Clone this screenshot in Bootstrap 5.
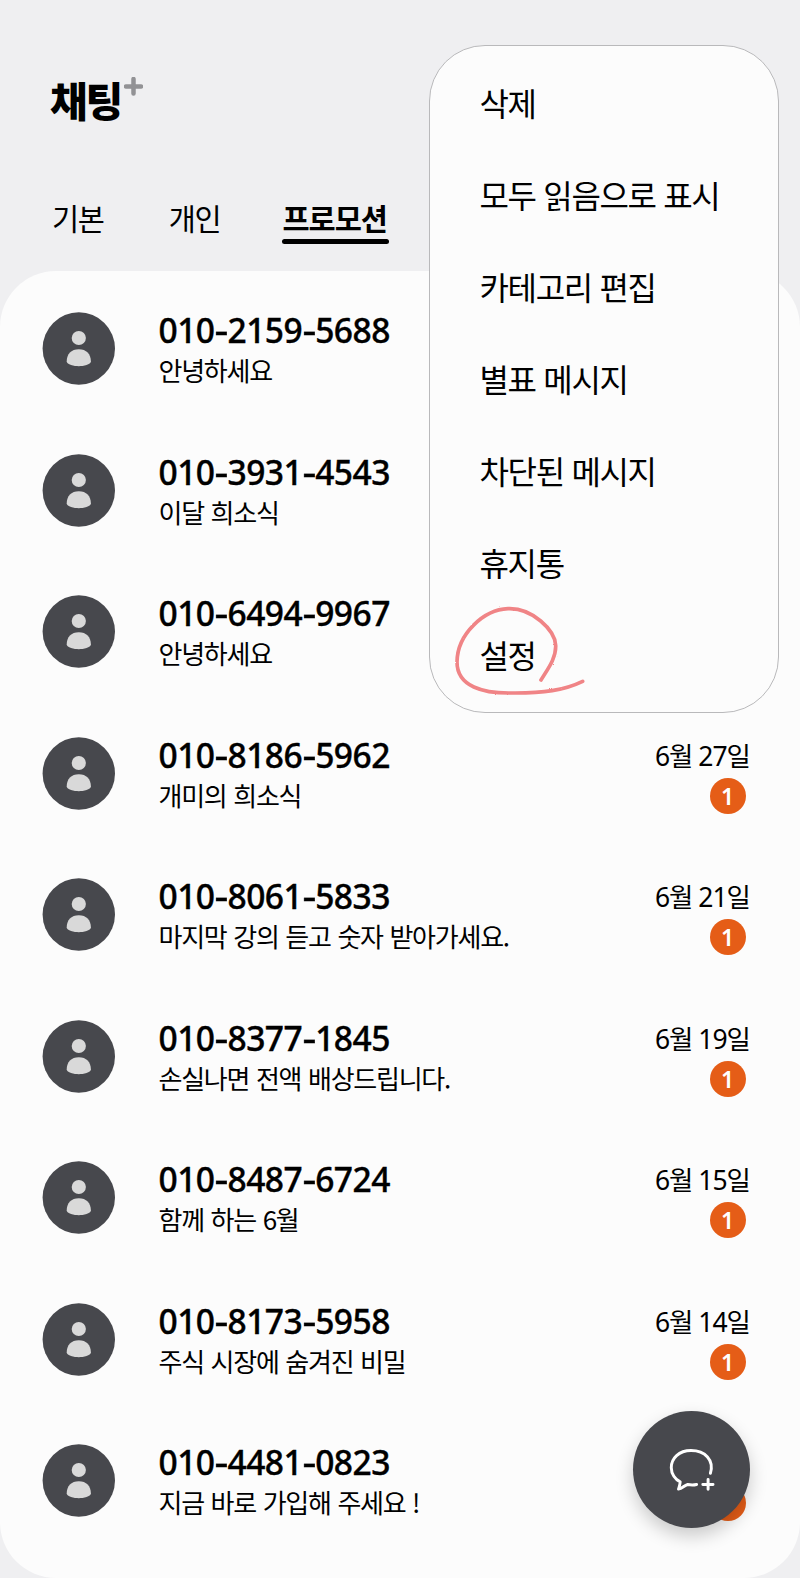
<!DOCTYPE html>
<html lang="ko">
<head>
<meta charset="utf-8">
<meta name="viewport" content="width=device-width, initial-scale=1">
<title>채팅+</title>
<link href="https://cdn.jsdelivr.net/npm/bootstrap@5.3.0/dist/css/bootstrap.min.css" rel="stylesheet">
<style>
  body { background: #efeff1; color: #000; font-family: "Noto Sans CJK KR", sans-serif; }
  .screen { width: 800px; height: 1578px; }
  .app-head { height: 271px; padding: 67px 0 0 50px; }
  .brand { height: 70px; font-size: 41px; font-weight: 900; letter-spacing: -2.1px; line-height: 64px; }
  .brand svg { margin: 10px 0 0 3px; }
  .tabs { margin-top: 55px; padding-left: 2px; gap: 65px; font-size: 29.5px; letter-spacing: -1.3px; line-height: 50px; }
  .tabs a { color: #000; text-decoration: none; height: 52px; }
  .tabs .current { font-weight: 700; letter-spacing: -1px; margin-left: -3px; }
  .tabs .current::after { content: ""; display: block; height: 5px; margin: -3px 0 0; width: 107px; border-radius: 3px; background: #000; }
  .sheet { height: 1306.5px; background: #fcfcfc; border-radius: 56px; padding: 41px 50px 0 42px; }
  .chat { height: 141.5px; }
  .avatar { width: 73px; height: 73px; flex: none; }
  .chat-text { margin-left: 43.5px; white-space: nowrap; }
  .phone { font-family: "Noto Sans", sans-serif; font-weight: 500; font-size: 33.6px; line-height: 36px; letter-spacing: -.55px; margin-bottom: 2px; -webkit-text-stroke: .35px #000; }
  .phone i { display: inline-block; font-style: normal; transform: scaleX(1.28); margin: 0 1.3px 0 1.5px; }
  .preview { font-size: 26px; line-height: 40px; letter-spacing: -1.25px; word-spacing: .7px; }
  .date { font-family: "Noto Sans", "Noto Sans CJK KR", sans-serif; font-size: 26.5px; line-height: 38px; letter-spacing: -1px; margin: 0 0 2px; }
  .count { width: 36px; height: 36px; border-radius: 50%; background: #e55d17; color: #fff; font: 600 23px/36px "Noto Sans", sans-serif; margin: 1px 4.5px 0 0; text-align: center; }
  .options { top: 45px; left: 429px; width: 350px; height: 668px; background: #fcfcfc; border: 1.5px solid #b9b9bb; border-radius: 56px; padding: 10px 0 0 49.5px; }
  .options li { height: 92px; line-height: 92px; font-size: 32px; letter-spacing: -1.35px; white-space: nowrap; }
  .scribble { left: 23.5px; top: 555.5px; }
  .compose { left: 632.5px; top: 1410.5px; width: 117px; height: 117px; background: #47484d; box-shadow: 0 8px 18px rgba(0,0,0,.2); border: 0; padding: 0; }
</style>
</head>
<body>
<svg width="0" height="0" class="position-absolute">
  <symbol id="person" viewBox="0 0 73 73">
    <circle cx="36.8" cy="36.5" r="36.2" fill="#47484d"/>
    <circle cx="36.8" cy="26" r="7.1" fill="#d9d9d9"/>
    <path d="M24.7 49.5C24.7 42 29.3 37.2 36.8 37.2S48.9 42 48.9 49.5C48.9 52.5 41.3 54.2 36.8 54.2S24.7 52.5 24.7 49.5Z" fill="#d9d9d9"/>
  </symbol>
</svg>
<main class="screen position-relative overflow-hidden">
  <header class="app-head">
    <h1 class="brand d-flex align-items-start m-0"><span>채팅</span>
      <svg width="19" height="19" viewBox="0 0 19 19"><path d="M9.5 2V16.6M2 9.5H17" fill="none" stroke="#929295" stroke-width="4.5" stroke-linecap="round"/></svg>
    </h1>
    <nav class="tabs d-flex"><a href="#">기본</a><a href="#">개인</a><a href="#" class="current">프로모션</a></nav>
  </header>
  <section class="sheet">
    <div class="chat d-flex"><svg class="avatar"><use href="#person"/></svg><div class="chat-text"><div class="phone">010<i>-</i>2159<i>-</i>5688</div><div class="preview">안녕하세요</div></div></div>
    <div class="chat d-flex"><svg class="avatar"><use href="#person"/></svg><div class="chat-text"><div class="phone">010<i>-</i>3931<i>-</i>4543</div><div class="preview">이달 희소식</div></div></div>
    <div class="chat d-flex"><svg class="avatar"><use href="#person"/></svg><div class="chat-text"><div class="phone">010<i>-</i>6494<i>-</i>9967</div><div class="preview">안녕하세요</div></div></div>
    <div class="chat d-flex"><svg class="avatar"><use href="#person"/></svg><div class="chat-text"><div class="phone">010<i>-</i>8186<i>-</i>5962</div><div class="preview">개미의 희소식</div></div><div class="ms-auto d-flex flex-column align-items-end"><div class="date">6월 27일</div><div class="count">1</div></div></div>
    <div class="chat d-flex"><svg class="avatar"><use href="#person"/></svg><div class="chat-text"><div class="phone">010<i>-</i>8061<i>-</i>5833</div><div class="preview">마지막 강의 듣고 숫자 받아가세요.</div></div><div class="ms-auto d-flex flex-column align-items-end"><div class="date">6월 21일</div><div class="count">1</div></div></div>
    <div class="chat d-flex"><svg class="avatar"><use href="#person"/></svg><div class="chat-text"><div class="phone">010<i>-</i>8377<i>-</i>1845</div><div class="preview">손실나면 전액 배상드립니다.</div></div><div class="ms-auto d-flex flex-column align-items-end"><div class="date">6월 19일</div><div class="count">1</div></div></div>
    <div class="chat d-flex"><svg class="avatar"><use href="#person"/></svg><div class="chat-text"><div class="phone">010<i>-</i>8487<i>-</i>6724</div><div class="preview">함께 하는 6월</div></div><div class="ms-auto d-flex flex-column align-items-end"><div class="date">6월 15일</div><div class="count">1</div></div></div>
    <div class="chat d-flex"><svg class="avatar"><use href="#person"/></svg><div class="chat-text"><div class="phone">010<i>-</i>8173<i>-</i>5958</div><div class="preview">주식 시장에 숨겨진 비밀</div></div><div class="ms-auto d-flex flex-column align-items-end"><div class="date">6월 14일</div><div class="count">1</div></div></div>
    <div class="chat d-flex"><svg class="avatar"><use href="#person"/></svg><div class="chat-text"><div class="phone">010<i>-</i>4481<i>-</i>0823</div><div class="preview">지금 바로 가입해 주세요 !</div></div><div class="ms-auto d-flex flex-column align-items-end"><div class="date">&nbsp;</div><div class="count"></div></div></div>
  </section>
  <ul class="options list-unstyled position-absolute m-0">
    <li>삭제</li><li>모두 읽음으로 표시</li><li>카테고리 편집</li><li>별표 메시지</li><li>차단된 메시지</li><li>휴지통</li><li>설정</li>
    <svg class="scribble position-absolute" width="133" height="100" viewBox="100 245 399 300" fill="none">
      <defs><filter id="crayon" x="-5%" y="-5%" width="110%" height="110%"><feTurbulence type="fractalNoise" baseFrequency=".5" numOctaves="2" result="n"/><feDisplacementMap in="SourceGraphic" in2="n" scale="6"/></filter></defs>
      <path d="M361 479C378 450 407 415 405 375C403 330 335 262 262 265C190 268 110 340 109 425C109 500 190 519 270 518C370 519 430 510 486 483" stroke="#f08486" stroke-width="11" stroke-linecap="round" stroke-linejoin="round" filter="url(#crayon)"/>
    </svg>
  </ul>
  <button class="compose btn rounded-circle position-absolute d-flex align-items-center justify-content-center" aria-label="새 대화">
    <svg width="50" height="46" viewBox="199 197 150 140" fill="none" stroke="#fff" stroke-width="9" stroke-linecap="round" stroke-linejoin="round"><path d="M333 280C345 240 317 211 274 211C237 211 214 235 214 263C214 282 226 299 241 306C241 315 238 321 236 328C248 327 252 317 264 314C274 316 282 316 291 314M310 314H341M326 299V329"/></svg>
  </button>
</main>
<script src="https://cdn.jsdelivr.net/npm/bootstrap@5.3.0/dist/js/bootstrap.bundle.min.js"></script>
</body>
</html>
